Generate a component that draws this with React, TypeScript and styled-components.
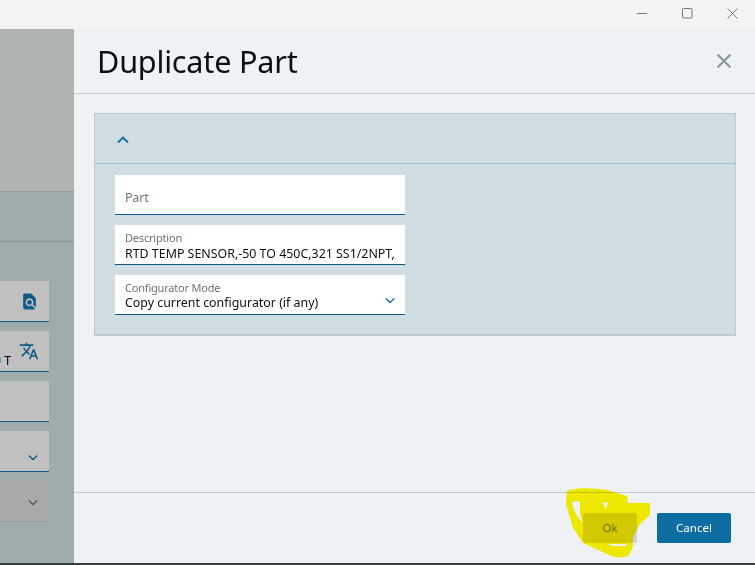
import React from 'react';
import styled, { createGlobalStyle } from 'styled-components';
import { MdFindInPage, MdTranslate } from 'react-icons/md';

const GlobalStyle = createGlobalStyle`
  html, body { margin: 0; padding: 0; height: 100%; overflow: hidden; }
  body { font-family: "Noto Sans", "Open Sans", sans-serif; background: #f3f3f3; }
  * { box-sizing: border-box; }
`;

const Page = styled.div`
  width: 755px;
  height: 565px;
  display: flex;
  flex-direction: column;
  overflow: hidden;
`;

const TitleBar = styled.div`
  height: 29px;
  flex: none;
  background: #f3f3f3;
  display: flex;
  justify-content: flex-end;
  align-items: center;
  padding: 0 13px 0 0;
  gap: 25px;
`;

const WinButton = styled.button`
  width: 20px;
  height: 20px;
  padding: 0;
  border: 0;
  background: none;
  display: flex;
  align-items: center;
  justify-content: center;
  margin-top: -3px;
`;

const Main = styled.div`
  flex: 1;
  min-height: 0;
  display: flex;
`;

const BottomEdge = styled.div`
  height: 2px;
  flex: none;
  background: #3a3d40;
`;

/* dimmed page behind the dialog */
const Backdrop = styled.div`
  width: 74px;
  flex: none;
  background: #a0abab;
  display: flex;
  flex-direction: column;
`;

const BackHeader = styled.div`
  height: 163px;
  flex: none;
  background: #b0b3b4;
  border-bottom: 1px solid #959d9e;
`;

const BackBand = styled.div`
  height: 50px;
  flex: none;
  border-bottom: 1px solid #7f9497;
`;

const BackFields = styled.div`
  display: flex;
  flex-direction: column;
  gap: 9px;
  padding: 39px 25px 0 0;
`;

const BackField = styled.div<{ $disabled?: boolean }>`
  height: 41px;
  background: ${(p) => (p.$disabled ? '#a9a9a9' : '#c0c0c0')};
  border-bottom: ${(p) => (p.$disabled ? '1px solid #999' : '1px solid #0e5a85')};
  display: flex;
  align-items: center;
  justify-content: flex-end;
  padding-right: 10px;
  position: relative;
  font-size: 13px;
  color: #111;
`;

const ClippedText = styled.span`
  position: absolute;
  left: 0;
  bottom: 2px;
  display: flex;
  align-items: center;
  gap: 3px;
  line-height: 18px;
`;

const Dot = styled.i`
  width: 1px;
  height: 6px;
  background: #5aa2d6;
`;

const LowIcon = styled.span<{ $high?: boolean }>`
  display: flex;
  margin-top: ${(p) => (p.$high ? '2px' : '13px')};
  margin-right: 1px;
`;

const Dialog = styled.div`
  flex: 1;
  min-width: 0;
  background: #eef2f5;
  display: flex;
  flex-direction: column;
`;

const DialogHeader = styled.div`
  height: 65px;
  flex: none;
  border-bottom: 1px solid #c6cbce;
  padding: 0 24px 0 23px;
  display: flex;
  align-items: center;
  justify-content: space-between;
`;

const Title = styled.h1`
  margin: -1px 0 0;
  font-size: 30.6px;
  font-weight: 400;
  color: #0b0f14;
  letter-spacing: -0.2px;
`;

const CloseButton = styled.button`
  width: 16px;
  height: 16px;
  margin-right: -1px;
  padding: 0;
  border: 0;
  background: none;
  display: flex;
`;

const DialogBody = styled.div`
  flex: 1;
  padding: 19px 19px 0 20px;
`;

const Panel = styled.section`
  height: 223px;
  background: #d0dde2;
  border: 1px solid #bccbd0;
  border-bottom-width: 2px;
  display: flex;
  flex-direction: column;
`;

const PanelHeader = styled.div`
  height: 50px;
  flex: none;
  border-bottom: 1px solid #a3bfca;
  padding: 2px 0 0 22px;
  display: flex;
  align-items: center;
`;

const FieldStack = styled.div`
  width: 290px;
  margin: 11px 0 0 20px;
  display: flex;
  flex-direction: column;
  gap: 10px;
`;

const Field = styled.div`
  height: 40px;
  background: #fff;
  border-bottom: 1px solid #0e5a85;
  padding: 3px 10px 0;
  display: flex;
  flex-direction: column;
  justify-content: center;
  position: relative;
`;

const Label = styled.label<{ $large?: boolean }>`
  font-size: ${(p) => (p.$large ? '12.5px' : '11px')};
  letter-spacing: -0.2px;
  line-height: 14px;
  margin-top: ${(p) => (p.$large ? '3px' : '0')};
  color: #6a747c;
`;

const Value = styled.div<{ $tight?: boolean }>`
  font-size: 12.4px;
  line-height: 16px;
  color: #0d1116;
  white-space: nowrap;
  overflow: hidden;
  margin-top: ${(p) => (p.$tight ? '0' : '1px')};
`;

const SelectArrow = styled.span`
  position: absolute;
  right: 10px;
  bottom: 10px;
  display: flex;
`;

const Footer = styled.div`
  height: 71px;
  flex: none;
  border-top: 1px solid #c6cbce;
  padding: 20px 24px 0 0;
  display: flex;
  justify-content: flex-end;
  gap: 20px;
  position: relative;
`;

const ActionButton = styled.button<{ $primary?: boolean; $wide?: boolean }>`
  width: ${(p) => (p.$wide ? '74px' : '54px')};
  height: 30px;
  border: 0;
  border-radius: 2px;
  padding: 0 0 1px;
  font: inherit;
  font-size: 11.5px;
  background: ${(p) => (p.$primary ? '#0d6ea3' : '#d2d2d2')};
  color: ${(p) => (p.$primary ? '#fff' : '#6e6e6e')};
`;

const Scribble = styled.svg`
  position: absolute;
  left: 486px;
  top: -8px;
  mix-blend-mode: multiply;
  pointer-events: none;
`;

const Chevron = ({ up, color, small }: { up?: boolean; color: string; small?: boolean }) => (
  <svg width={small ? 10 : 12} height={small ? 7 : 8} viewBox="0 0 12 8" fill="none">
    <path d={up ? 'M1 6.5 6 1.5l5 5' : 'M1 1.5l5 5 5-5'} stroke={color} strokeWidth={small ? 1.6 : 1.9} />
  </svg>
);

export default function App() {
  return (
    <Page>
      <GlobalStyle />
      <TitleBar>
        <WinButton aria-label="Minimize">
          <svg width="10" height="10" viewBox="0 0 10 10"><path d="M0 5.5h10" stroke="#777" /></svg>
        </WinButton>
        <WinButton aria-label="Maximize">
          <svg width="11" height="11" viewBox="0 0 11 11" fill="none"><rect x=".5" y=".5" width="9.5" height="9.5" rx="1" stroke="#777" /></svg>
        </WinButton>
        <WinButton aria-label="Close window">
          <svg width="11" height="11" viewBox="0 0 11 11"><path d="M.5.5l10 10M10.5.5l-10 10" stroke="#777" /></svg>
        </WinButton>
      </TitleBar>
      <Main>
        <Backdrop>
          <BackHeader />
          <BackBand />
          <BackFields>
            <BackField>
              <MdFindInPage size={19} color="#0e5a85" />
            </BackField>
            <BackField>
              <ClippedText><Dot />T</ClippedText>
              <MdTranslate size={20} color="#0e5a85" />
            </BackField>
            <BackField />
            <BackField>
              <LowIcon><Chevron small color="#0e5a85" /></LowIcon>
            </BackField>
            <BackField $disabled>
              <LowIcon $high><Chevron small color="#555" /></LowIcon>
            </BackField>
          </BackFields>
        </Backdrop>
        <Dialog>
          <DialogHeader>
            <Title>Duplicate Part</Title>
            <CloseButton aria-label="Close">
              <svg width="16" height="16" viewBox="0 0 16 16"><path d="M1.5 1.5l13 13M14.5 1.5l-13 13" stroke="#87949c" strokeWidth="2" /></svg>
            </CloseButton>
          </DialogHeader>
          <DialogBody>
            <Panel>
              <PanelHeader>
                <Chevron up color="#14699b" />
              </PanelHeader>
              <FieldStack>
                <Field>
                  <Label $large>Part</Label>
                </Field>
                <Field>
                  <Label>Description</Label>
                  <Value>RTD TEMP SENSOR,-50 TO 450C,321 SS1/2NPT,</Value>
                </Field>
                <Field>
                  <Label>Configurator Mode</Label>
                  <Value $tight>Copy current configurator (if any)</Value>
                  <SelectArrow><Chevron small color="#14699b" /></SelectArrow>
                </Field>
              </FieldStack>
            </Panel>
          </DialogBody>
          <Footer>
            <ActionButton>Ok</ActionButton>
            <ActionButton $primary $wide>Cancel</ActionButton>
            {/* yellow marker scribble drawn on the screenshot */}
            <Scribble width="100" height="80" viewBox="560 484 100 80">
              <path
                fillRule="evenodd"
                fill="#fff500"
                d="M567 490 C575 486 596 487 607 489 L627 495 L628 502 L650 502 L650 514 L640 523 L636 530 L633 536 L633 545 L630 553 C626 558 614 557 607 553 L583 542 L573 527 L566 503 Z
                   M572 502 C575 499 579 500 580 501 L580 513 L583 522 C577 516 573 509 572 502 Z
                   M602 501 L608 502 L606 508 Z
                   M608 543 L627 543 L626 545 L612 545 Z"
              />
            </Scribble>
          </Footer>
        </Dialog>
      </Main>
      <BottomEdge />
    </Page>
  );
}
